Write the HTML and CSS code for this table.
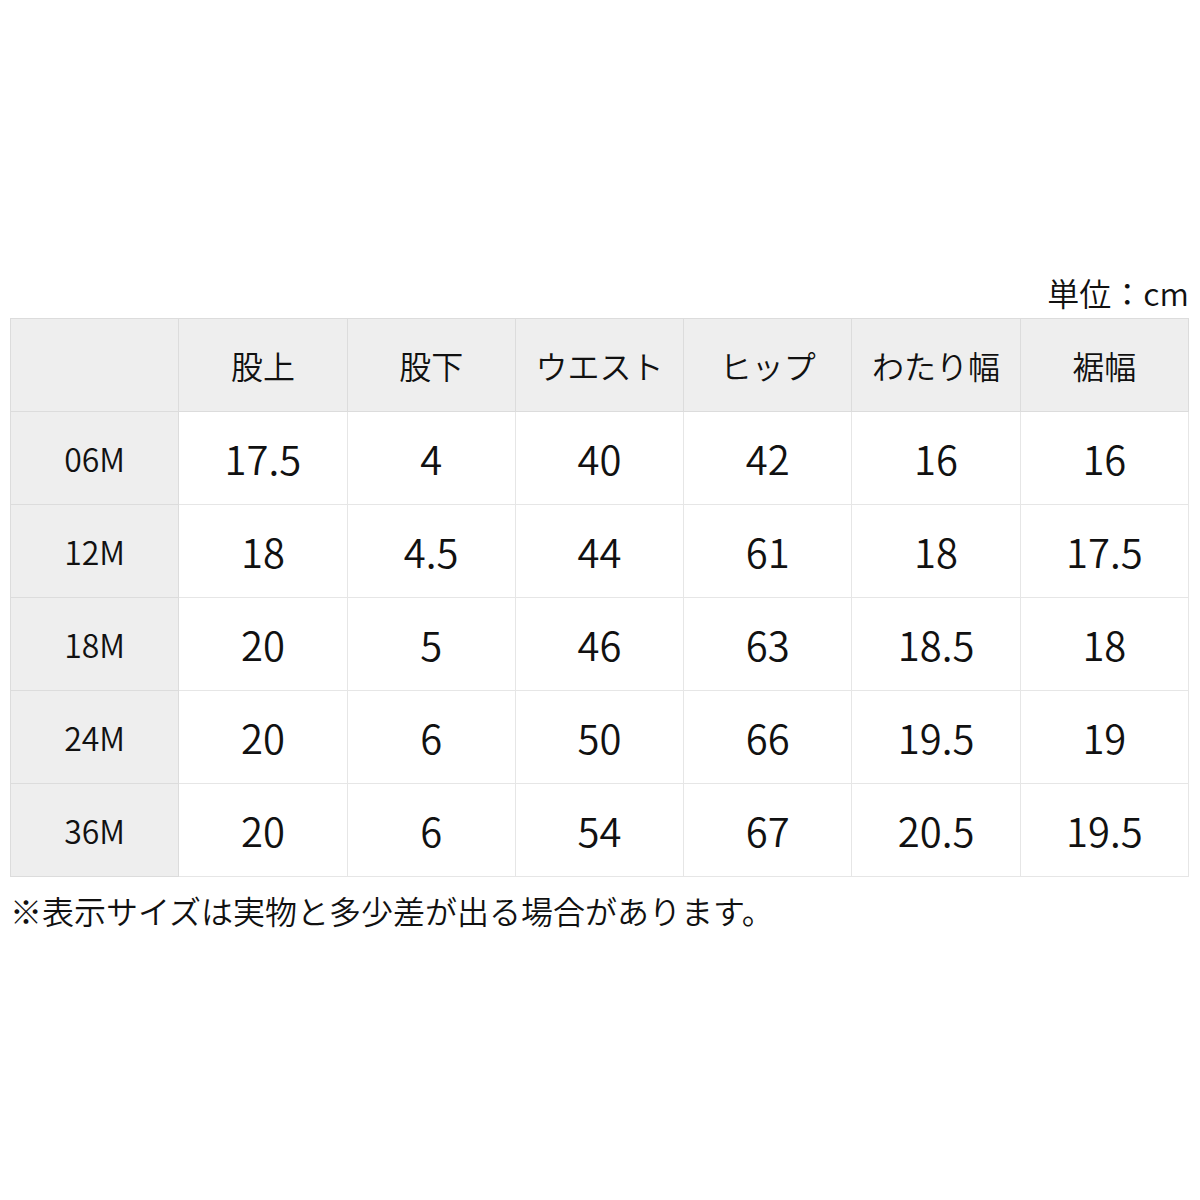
FILE: index.html
```html
<!DOCTYPE html>
<html lang="ja">
<head>
<meta charset="utf-8">
<link rel="stylesheet" href="styles.css">
</head>
<body>
<div class="page">
  <div class="unit">単位：cm</div>
  <table class="size">
    <thead>
      <tr><th class="corner"></th><th>股上</th><th>股下</th><th>ウエスト</th><th>ヒップ</th><th>わたり幅</th><th>裾幅</th></tr>
    </thead>
    <tbody>
      <tr><th>06M</th><td>17.5</td><td>4</td><td>40</td><td>42</td><td>16</td><td>16</td></tr>
      <tr><th>12M</th><td>18</td><td>4.5</td><td>44</td><td>61</td><td>18</td><td>17.5</td></tr>
      <tr><th>18M</th><td>20</td><td>5</td><td>46</td><td>63</td><td>18.5</td><td>18</td></tr>
      <tr><th>24M</th><td>20</td><td>6</td><td>50</td><td>66</td><td>19.5</td><td>19</td></tr>
      <tr><th>36M</th><td>20</td><td>6</td><td>54</td><td>67</td><td>20.5</td><td>19.5</td></tr>
    </tbody>
  </table>
  <div class="note">※表示サイズは実物と多少差が出る場合があります。</div>
</div>
</body>
</html>
```
FILE: styles.css
```css
html, body {
  margin: 0;
  padding: 0;
  background: #fff;
}
.page {
  width: 1200px;
  height: 1200px;
  padding-top: 272px;
  box-sizing: border-box;
  font-family: "Noto Sans CJK JP", "Noto Sans", sans-serif;
  font-weight: 350;
  color: #111;
}
.unit {
  width: 1189px;
  text-align: right;
  font-size: 32px;
  line-height: 40px;
  height: 40px;
  margin-bottom: 6px;
}
.size {
  margin-left: 10px;
  width: 1179px;
  table-layout: fixed;
  border-collapse: collapse;
}
.size th, .size td {
  height: 92px;
  padding: 0;
  text-align: center;
  vertical-align: middle;
  border: 1px solid #e6e6e6;
  font-weight: 350;
}
.size thead th {
  background: #eeeeee;
  font-size: 32px;
  border-color: #dcdcdc;
}
.size tbody th {
  background: #eeeeee;
  font-size: 32px;
  border-color: #dcdcdc;
}
.size td {
  font-size: 40px;
}
.note {
  margin-top: 13px;
  padding-left: 10px;
  font-size: 32px;
  line-height: 40px;
}
```
